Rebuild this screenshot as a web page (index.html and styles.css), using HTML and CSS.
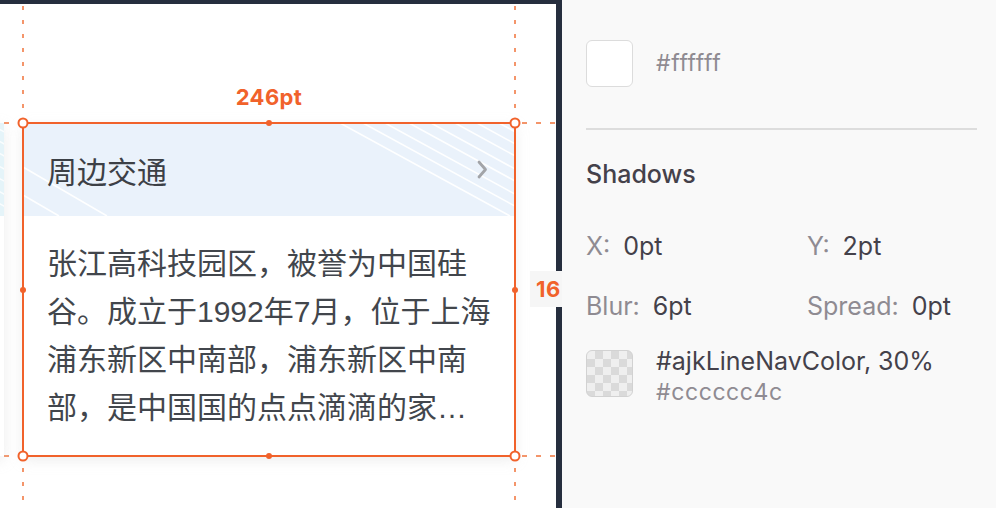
FILE: index.html
```html
<!DOCTYPE html>
<html lang="zh-CN">
<head>
<meta charset="utf-8">
<title>Card spec</title>
<link rel="stylesheet" href="styles.css">
</head>
<body>
<div class="app">
  <div class="canvas">
    <div class="artboard">
      <span class="guide guide-v guide-left"></span>
      <span class="guide guide-v guide-right"></span>
      <span class="guide guide-h guide-top"></span>
      <span class="guide guide-h guide-bottom"></span>

      <div class="cards">
        <div class="card card-prev">
          <div class="card-head">
            <svg class="stripes" viewBox="0 0 492 93" preserveAspectRatio="none">
              <g stroke="#fff" stroke-width="1.5" stroke-opacity=".8">
                <line x1="317" y1="0" x2="487" y2="93"/><line x1="340" y1="0" x2="510" y2="93"/>
                <line x1="362" y1="0" x2="532" y2="93"/><line x1="386" y1="0" x2="556" y2="93"/>
                <line x1="408" y1="0" x2="578" y2="93"/><line x1="432" y1="0" x2="602" y2="93"/>
                <line x1="454" y1="0" x2="624" y2="93"/><line x1="476" y1="0" x2="646" y2="93"/>
              </g>
            </svg>
          </div>
          <div class="card-body"></div>
        </div>
        <div class="card">
          <div class="card-head">
            <svg class="stripes" viewBox="0 0 492 93" preserveAspectRatio="none">
              <g stroke="#fff" stroke-width="1.6" stroke-opacity=".95">
                <line x1="0" y1="44" x2="84" y2="93"/><line x1="0" y1="72" x2="36" y2="93"/>
                <line x1="317" y1="0" x2="487" y2="93"/><line x1="340" y1="0" x2="510" y2="93"/>
                <line x1="362" y1="0" x2="532" y2="93"/><line x1="386" y1="0" x2="556" y2="93"/>
                <line x1="408" y1="0" x2="578" y2="93"/><line x1="432" y1="0" x2="602" y2="93"/>
                <line x1="454" y1="0" x2="624" y2="93"/><line x1="476" y1="0" x2="646" y2="93"/>
              </g>
            </svg>
            <span class="card-title">周边交通</span>
            <svg class="chevron" width="11" height="19" viewBox="0 0 11 19"><path d="M2 2 L8.5 9.5 L2 17" fill="none" stroke="#a2a4a8" stroke-width="2.8" stroke-linecap="round" stroke-linejoin="round"/></svg>
          </div>
          <p class="card-body card-text">张江高科技园区，被誉为中国硅谷。成立于1992年7月，位于上海浦东新区中南部，浦东新区中南部，是中国国的点点滴滴的家…</p>
        </div>
      </div>

      <div class="selection">
        <span class="handle h-tl"></span><span class="handle h-tr"></span>
        <span class="handle h-bl"></span><span class="handle h-br"></span>
        <span class="handle dot d-t"></span><span class="handle dot d-b"></span>
        <span class="handle dot d-l"></span><span class="handle dot d-r"></span>
      </div>

      <span class="dim dim-w">246pt</span>
      <span class="dim dim-h">16</span>
    </div>
  </div>

  <aside class="panel">
    <div class="fill-row">
      <span class="swatch"></span>
      <span class="hex">#ffffff</span>
    </div>
    <hr class="divider">
    <h2 class="section-title">Shadows</h2>
    <div class="props">
      <div class="prop"><span class="prop-label">X:</span><span class="prop-value">0pt</span></div>
      <div class="prop"><span class="prop-label">Y:</span><span class="prop-value">2pt</span></div>
      <div class="prop"><span class="prop-label">Blur:</span><span class="prop-value">6pt</span></div>
      <div class="prop"><span class="prop-label">Spread:</span><span class="prop-value">0pt</span></div>
    </div>
    <div class="color-row">
      <span class="swatch swatch-alpha"></span>
      <div class="color-text">
        <div class="color-name">#ajkLineNavColor, 30%</div>
        <div class="hex">#cccccc4c</div>
      </div>
    </div>
  </aside>
</div>
</body>
</html>
```
FILE: styles.css
```css
* { box-sizing: border-box; }
html, body { margin: 0; padding: 0; }
body {
  width: 996px;
  height: 508px;
  overflow: hidden;
  font-family: "Inter", "Liberation Sans", sans-serif;
}
.app { display: flex; height: 508px; }

/* ---------- canvas ---------- */
.canvas {
  flex: none;
  width: 562px;
  height: 508px;
  background: #262e3e;
  padding: 4px 6px 0 0;
  overflow: hidden;
}
.artboard {
  position: relative;
  width: 556px;
  height: 504px;
  background: #fff;
}
.guide { position: absolute; z-index: 0; }
.guide-v {
  top: 0; bottom: 0; width: 2px;
  background: repeating-linear-gradient(to bottom, transparent 0 2px, #f4956a 2px 6px, transparent 6px 14px);
}
.guide-left { left: 22px; }
.guide-right { left: 514px; }
.guide-h {
  left: 0; right: 0; height: 2px;
  background: repeating-linear-gradient(to right, transparent 0 4px, #f4956a 4px 9px, transparent 9px 14px);
}
.guide-top { top: 118px; }
.guide-bottom { top: 451px; }

.cards {
  position: relative;
  z-index: 1;
  display: flex;
  gap: 19px;
  margin-left: -488px;
  padding-top: 119px;
}
.card {
  flex: none;
  width: 492px;
  background: #fff;
  box-shadow: 0 4px 12px rgba(204, 204, 204, 0.35);
}
.card-head {
  position: relative;
  height: 93px;
  background: #eaf2fb;
  display: flex;
  align-items: center;
  justify-content: space-between;
  padding: 0 27px 0 24px;
  overflow: hidden;
}
.card-prev .card-head { background: #e5f4f9; }
.stripes { position: absolute; left: 0; top: 0; width: 100%; height: 100%; }
.card-title {
  position: relative;
  font: 400 30px/1 "Noto Sans CJK SC", sans-serif;
  color: #3c4046;
}
.chevron { position: relative; flex: none; }
.card-body {
  margin: 0;
  height: 240px;
}
.card-text {
  padding: 24px 22px 24px 24px;
  font: 400 30px/48px "Liberation Sans", "Noto Sans CJK SC", sans-serif;
  color: #42464c;
  overflow: hidden;
}

/* ---------- selection overlay ---------- */
.selection {
  position: absolute;
  z-index: 2;
  left: 22px;
  top: 118px;
  width: 494px;
  height: 335px;
  border: 2px solid #f1622b;
}
.handle {
  position: absolute;
  width: 11px;
  height: 11px;
  border: 2px solid #f1622b;
  background: #fff;
  border-radius: 50%;
  transform: translate(-50%, -50%);
}
.dot { width: 6px; height: 6px; border: 0; background: #f1622b; }
.h-tl { left: -1px; top: -1px; }
.h-tr { left: calc(100% + 1px); top: -1px; }
.h-bl { left: -1px; top: calc(100% + 1px); }
.h-br { left: calc(100% + 1px); top: calc(100% + 1px); }
.d-t { left: 50%; top: -1px; }
.d-b { left: 50%; top: calc(100% + 1px); }
.d-l { left: -1px; top: 50%; }
.d-r { left: calc(100% + 1px); top: 50%; }

.dim {
  position: absolute;
  z-index: 3;
  font: 700 22px/36px "Inter", "Liberation Sans", sans-serif;
  letter-spacing: 0.4px;
  color: #f1622b;
  white-space: nowrap;
}
.dim-w { left: 269px; top: 75px; transform: translateX(-50%); }
.dim-h { left: 530px; top: 267px; width: 40px; padding-left: 6px; background: #f6f6f6; }

/* ---------- inspector panel ---------- */
.panel {
  flex: 1;
  background: #f9f9f9;
  padding: 40px 19px 0 24px;
  color: #44414a;
}
.fill-row { display: flex; align-items: center; gap: 23px; }
.swatch {
  flex: none;
  width: 47px;
  height: 47px;
  border-radius: 6px;
  border: 1px solid #dcdcdc;
  background: #fff;
}
.swatch-alpha {
  border-color: #d2d2d2;
  background: repeating-conic-gradient(#dadada 0 25%, #efefef 0 50%) 0 0 / 16px 16px;
}
.hex {
  font-size: 23px;
  line-height: 31px;
  color: #8f8b92;
  letter-spacing: 0.6px;
}
.divider {
  margin: 41px 0 0;
  border: 0;
  height: 2px;
  background: #dddddd;
}
.section-title {
  margin: 28px 0 0;
  font-size: 25px;
  font-weight: 500;
  line-height: 32px;
  color: #44414a;
}
.props {
  display: grid;
  grid-template-columns: 221px 1fr;
  row-gap: 28px;
  margin-top: 40px;
}
.prop { display: flex; gap: 13px; font-size: 25px; line-height: 32px; }
.prop-label { color: #8f8b92; }
.prop-value { color: #44414a; }
.color-row { display: flex; align-items: flex-start; gap: 23px; margin-top: 28px; }
.color-text { margin-top: -4px; }
.color-name { font-size: 25px; line-height: 31px; color: #44414a; }
```
